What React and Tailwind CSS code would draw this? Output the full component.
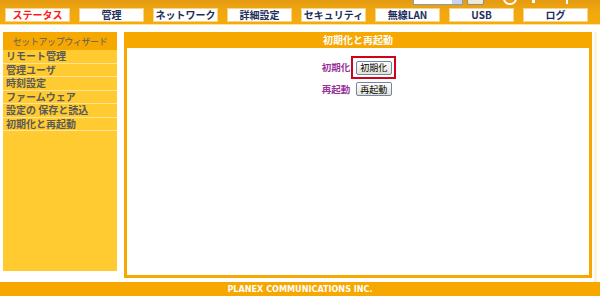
import React from 'react';

const tabs = ['ステータス', '管理', 'ネットワーク', '詳細設定', 'セキュリティ', '無線LAN', 'USB', 'ログ'];
const menu = ['リモート管理', '管理ユーザ', '時刻設定', 'ファームウェア', '設定の 保存と読込', '初期化と再起動'];

const jp = { fontFamily: '"Noto Sans CJK JP", "Noto Sans", sans-serif' };

const Btn = ({ children }) => (
  <button className="w-[36px] h-[14px] flex items-center justify-center rounded-[2px] border border-[#6f86a6] bg-gradient-to-b from-white to-[#e4e2d6] text-[9px] leading-none text-black">
    {children}
  </button>
);

export default function App() {
  return (
    <div className="w-[600px] h-[297px] overflow-hidden bg-white relative" style={jp}>
      {/* top bar */}
      <div className="h-[25px] bg-gradient-to-b from-[#e49a12] via-[#f1a80f] to-[#f5ab0a] border-b border-[#fde39a] relative">
        <div className="absolute left-[413px] top-[-5px] w-[50px] h-[10px] bg-white border border-[#7f9db9] flex">
          <span className="ml-auto w-[10px] h-full bg-[#c7d6f0]"></span>
        </div>
        <div className="absolute left-[467px] top-[-6px] w-[17px] h-[11px] bg-[#ece9d8] border border-[#8a8a8a] rounded-[2px]"></div>
        <div className="absolute left-[503px] top-[-8px] w-[14px] h-[13px] rounded-full border-2 border-white"></div>
        <div className="absolute left-[532px] top-0 w-[3px] h-[3px] bg-white"></div>
        <div className="absolute left-[566px] top-0 w-[2px] h-[4px] bg-white"></div>
        <div className="flex gap-[9px] pl-[5px] pt-[8px]">
          {tabs.map((t, i) => (
            <div
              key={t}
              className={`w-[65px] h-[14px] bg-white border border-[#f8d487] flex items-center justify-center text-[10px] font-bold leading-none ${i === 0 ? 'text-[#ff1a1a]' : 'text-[#1c2f5c]'}`}
            >
              {t}
            </div>
          ))}
        </div>
      </div>

      {/* body */}
      <div className="flex mt-[7px] h-[250px]">
        <div className="ml-[3px] w-[114px] h-[239px] bg-[#ffcb30] flex flex-col">
          <div className="h-[18px] bg-[#f6a800] flex items-center justify-center text-[9px] tracking-[-0.4px] text-[#5e5e5e] leading-none whitespace-nowrap">
            セットアップウィザード
          </div>
          {menu.map((m) => (
            <div key={m} className="h-[13.5px] border-b border-[#ffe493] pl-[3px] flex items-center text-[10px] font-bold text-[#5a5a5a] leading-none">
              {m}
            </div>
          ))}
        </div>

        <div className="ml-[7px] w-[468px] h-[246px] bg-[#f6a800] p-[3px] pt-0 flex flex-col">
          <div className="h-[16px] flex items-center justify-center text-[10px] font-bold text-white leading-none">
            初期化と再起動
          </div>
          <div className="flex-1 bg-white">
            <div className="grid grid-cols-[auto_auto] justify-center items-center gap-y-[3px] mt-[8px] pl-[2px]">
              <div className="text-[9.5px] font-bold text-[#993399] text-right pr-[1px]">初期化</div>
              <div className="w-[45px] h-[23px] border-2 border-[#d0021b] flex items-center justify-center">
                <Btn>初期化</Btn>
              </div>
              <div className="text-[9.5px] font-bold text-[#993399] text-right pr-[1px]">再起動</div>
              <div className="w-[45px] flex items-center justify-center">
                <Btn>再起動</Btn>
              </div>
            </div>
          </div>
        </div>

        <div className="ml-[2px] w-[3px] h-[250px] bg-[#fdf3dc]"></div>
      </div>

      {/* footer */}
      <div className="h-[14px] bg-[#f6a800] flex items-center justify-center text-[9px] font-bold text-white leading-none" style={{ fontFamily: '"DejaVu Sans Condensed", "DejaVu Sans", sans-serif' }}>
        PLANEX COMMUNICATIONS INC.
      </div>
    </div>
  );
}
